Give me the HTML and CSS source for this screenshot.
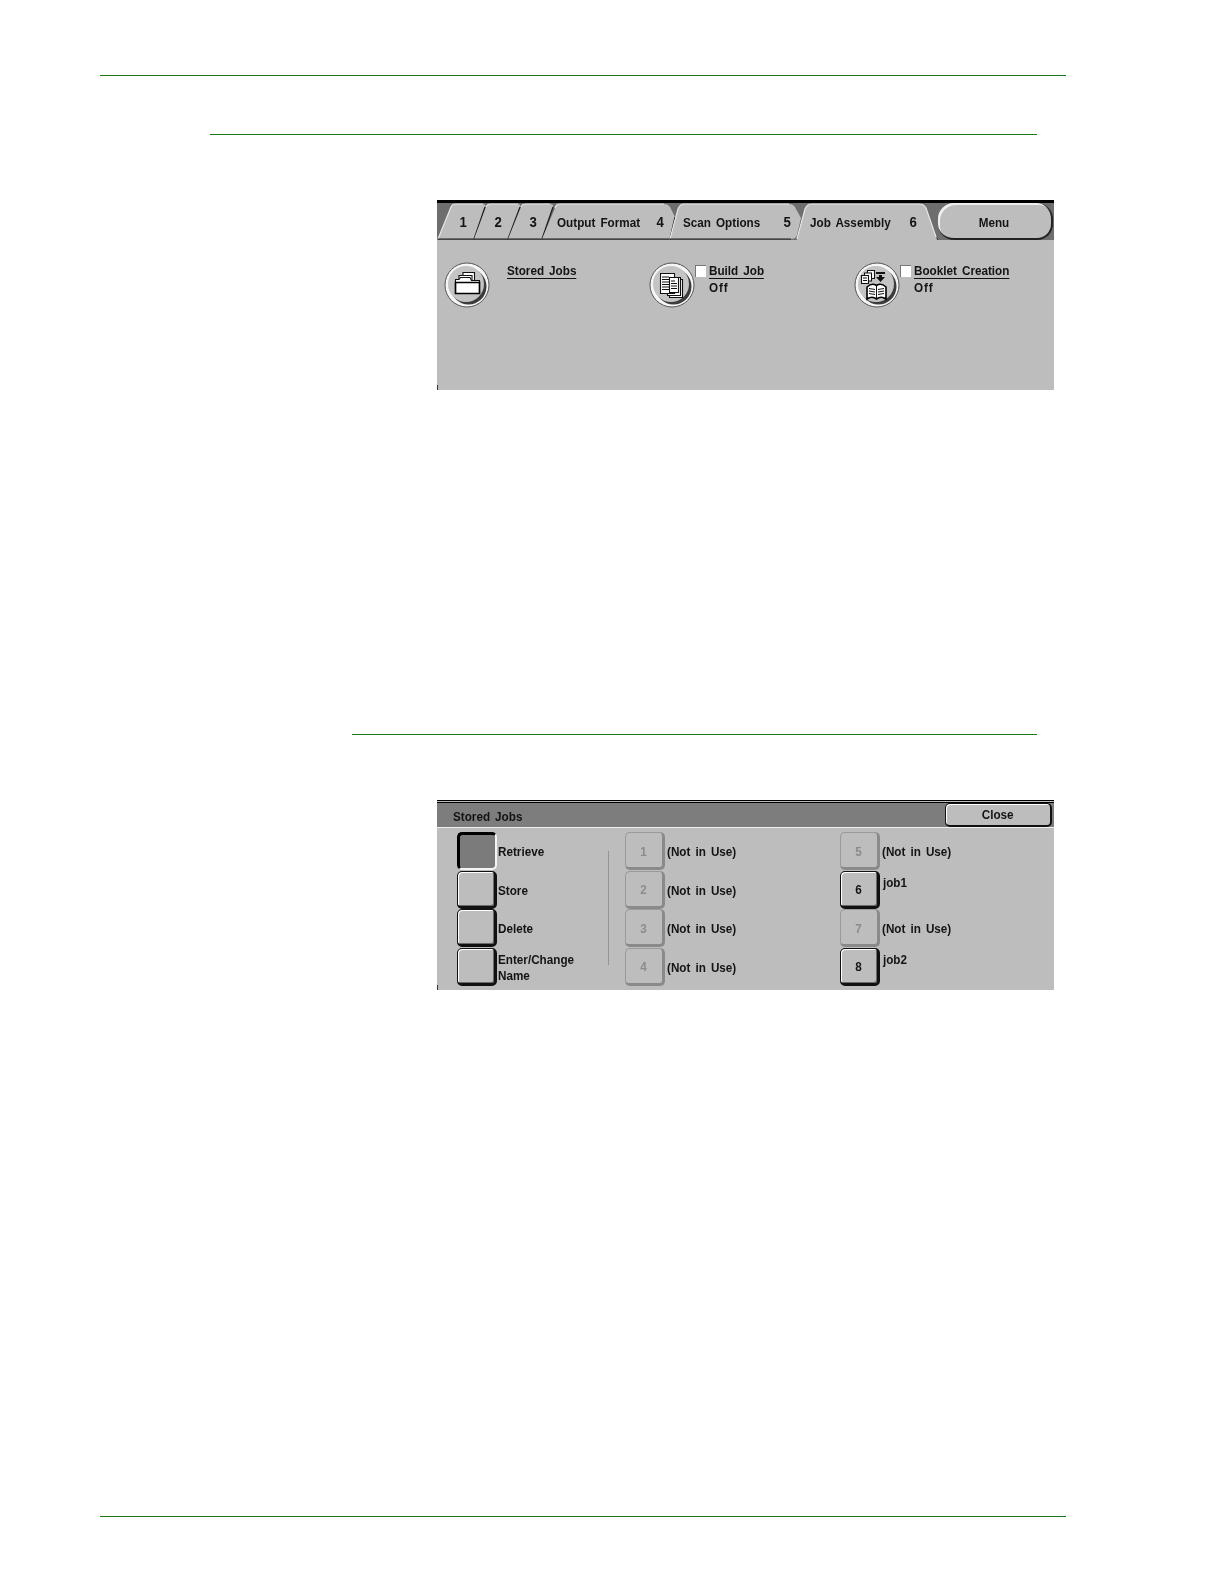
FILE: index.html
```html
<!DOCTYPE html>
<html lang="en">
<head>
<meta charset="utf-8">
<title>Job Assembly</title>
<link rel="stylesheet" href="styles.css">
</head>
<body>
<main class="sheet">
  <div class="rule rule-page-top"></div>
  <div class="rule rule-section"></div>

  <section class="panel panel-tabs">
    <div class="tabs">
      <svg class="tab-art" width="617" height="37" viewBox="0 0 617 37" aria-hidden="true">
        <path class="tab-fill" d="M1,36 L14,4 Q15,1 19,1 L46,1 Q49,1 48,4 L37,36 Z"/>
        <path class="tab-lit" d="M1,36 L14,4 Q15,1 19,1 L46,1"/>
        <path class="tab-dark" d="M48,4 L37,36 L1,36"/>
        <path class="tab-fill" d="M37,36 L49,4 Q50,1 54,1 L81,1 Q84,1 83,4 L71,36 Z"/>
        <path class="tab-lit" d="M49,4 Q50,1 54,1 L81,1"/>
        <path class="tab-dark" d="M83,4 L71,36 L37,36"/>
        <path class="tab-fill" d="M71,36 L84,4 Q85,1 89,1 L113,1 Q117,1 116,4 L105,36 Z"/>
        <path class="tab-lit" d="M84,4 Q85,1 89,1 L113,1"/>
        <path class="tab-dark" d="M116,4 L105,36 L71,36"/>
        <path class="tab-fill" d="M105,36 L118,5 Q119,1 123,1 L227,1 Q232,1 234,6 L238,14 L233,36 Z"/>
        <path class="tab-lit" d="M118,5 Q119,1 123,1 L227,1"/>
        <path class="tab-dark" d="M238,14 L233,36 L105,36"/>
        <path class="tab-fill" d="M233,36 L241,6 Q243,1 247,1 L352,1 Q357,1 359,6 L364,15 L360,32 Q359,36 354,36 Z"/>
        <path class="tab-lit" d="M233,36 L241,6 Q243,1 247,1 L352,1"/>
        <path class="tab-dark" d="M233,36 L354,36"/>
        <path class="tab-fill" d="M360,37 L368,6 Q370,1 375,1 L482,1 Q487,1 489,5 L500,37 Z"/>
        <path class="tab-lit" d="M360,36 L368,6 Q370,1 375,1 L482,1 Q487,1 489,5 L499,34"/>
        <path class="tab-dark" d="M500,36 L501,36"/>
      </svg>
      <div class="tab tab-1"><span class="num">1</span></div>
      <div class="tab tab-2"><span class="num">2</span></div>
      <div class="tab tab-3"><span class="num">3</span></div>
      <div class="tab tab-4"><span class="narrow">Output Format</span><span class="num">4</span></div>
      <div class="tab tab-5"><span class="narrow">Scan Options</span><span class="num">5</span></div>
      <div class="tab tab-6"><span class="narrow">Job Assembly</span><span class="num">6</span></div>
      <div class="menu"><span class="narrow narrow-mid">Menu</span></div>
    </div>
    <div class="features">
      <div class="feature">
        <svg class="round-icon" width="46" height="46" viewBox="0 0 46 46" aria-hidden="true">
          <circle class="ri-edge" cx="23" cy="23" r="22"/>
          <circle class="ri-shade" cx="24.5" cy="24.5" r="18"/>
          <circle class="ri-face" cx="22" cy="22" r="18"/>
          <path class="ic-white" d="M19,19 V10.5 H30.5 V19 Z"/>
          <path class="ic-white" d="M15,20 V13.5 H28 V20 Z"/>
          <path class="ic-white" d="M11.5,31.5 V17.5 H15 L16.5,15.5 H26 L27.5,18.5 H35.5 V31.5 Z"/>
          <path class="ic-bold" d="M11.5,31.5 V20.5 H35.5 V31.5 Z"/>
        </svg>
        <div class="feature-text feature-text-plain">
          <div class="feature-title narrow">Stored Jobs</div>
        </div>
      </div>
      <div class="feature">
        <svg class="round-icon" width="46" height="46" viewBox="0 0 46 46" aria-hidden="true">
          <circle class="ri-edge" cx="23" cy="23" r="22"/>
          <circle class="ri-shade" cx="24.5" cy="24.5" r="18"/>
          <circle class="ri-face" cx="22" cy="22" r="18"/>
          <path class="ic-white" d="M20.5,17.5 H33.5 V35.5 H20.5 Z"/>
          <path class="ic-white" d="M18.5,15.5 H31.5 V33.5 H18.5 Z"/>
          <path class="ic-white" d="M11.5,11.5 H25.5 V31.5 H11.5 Z"/>
          <path class="ic-lines" d="M13,15 H20 M13,17.5 H24 M13,20 H24 M13,22.5 H24 M13,25 H24 M13,27.5 H24"/>
          <path class="ic-white" d="M20.5,15.5 H29.5 V30.5 H20.5 Z"/>
          <path class="ic-lines" d="M22,19 H26 M22,21.5 H28 M22,24 H28 M22,26.5 H28"/>
        </svg>
        <span class="check"></span>
        <div class="feature-text">
          <div class="feature-title narrow">Build Job</div>
          <div class="feature-value narrow">Off</div>
        </div>
      </div>
      <div class="feature">
        <svg class="round-icon" width="46" height="46" viewBox="0 0 46 46" aria-hidden="true">
          <circle class="ri-edge" cx="23" cy="23" r="22"/>
          <circle class="ri-shade" cx="24.5" cy="24.5" r="18"/>
          <circle class="ri-face" cx="22" cy="22" r="18"/>
          <path class="ic-white" d="M13.5,8.5 H20.5 V16.5 H13.5 Z"/>
          <path class="ic-white" d="M10.5,11 H17.5 V19 H10.5 Z"/>
          <path class="ic-white" d="M7.5,13.5 H14.5 V21.5 H7.5 Z"/>
          <path class="ic-lines" d="M9,16 H13 M9,18.5 H13"/>
          <path class="ic-solid" d="M22,10 H31 V12 H22 Z M25,13 H28 V15 H31 L26.5,20 L22,15 H25 Z"/>
          <path class="ic-book" d="M13,25 Q18,20.5 22.5,23.5 Q27,20.5 32,25 V37 Q27,33.5 22.5,37 Q18,33.5 13,37 Z"/>
          <path class="ic-lines" d="M22.5,23.5 V37 M15,26.5 L21,27.5 M15,29 L21,30 M15,31.5 L21,32.5 M24,27.5 L30,26.5 M24,30 L30,29 M24,32.5 L30,31.5"/>
        </svg>
        <span class="check"></span>
        <div class="feature-text">
          <div class="feature-title narrow">Booklet Creation</div>
          <div class="feature-value narrow">Off</div>
        </div>
      </div>
    </div>
  </section>

  <div class="rule rule-sub"></div>

  <section class="panel panel-jobs">
    <header class="jobs-head">
      <span class="jobs-title narrow">Stored Jobs</span>
      <div class="close"><span class="narrow narrow-mid">Close</span></div>
    </header>
    <div class="jobs-body">
      <div class="col col-actions">
        <div class="row"><div class="key key-on"></div><div class="row-label narrow">Retrieve</div></div>
        <div class="row"><div class="key"></div><div class="row-label narrow">Store</div></div>
        <div class="row"><div class="key"></div><div class="row-label narrow">Delete</div></div>
        <div class="row"><div class="key"></div><div class="row-label narrow">Enter/Change<br>Name</div></div>
      </div>
      <div class="divider"></div>
      <div class="col col-slots col-slots-a">
        <div class="row"><div class="key key-off"><span class="narrow narrow-mid">1</span></div><div class="row-label narrow">(Not in Use)</div></div>
        <div class="row"><div class="key key-off"><span class="narrow narrow-mid">2</span></div><div class="row-label narrow">(Not in Use)</div></div>
        <div class="row"><div class="key key-off"><span class="narrow narrow-mid">3</span></div><div class="row-label narrow">(Not in Use)</div></div>
        <div class="row"><div class="key key-off"><span class="narrow narrow-mid">4</span></div><div class="row-label narrow">(Not in Use)</div></div>
      </div>
      <div class="col col-slots">
        <div class="row"><div class="key key-off"><span class="narrow narrow-mid">5</span></div><div class="row-label narrow">(Not in Use)</div></div>
        <div class="row"><div class="key"><span class="narrow narrow-mid">6</span></div><div class="row-label row-label-top narrow">job1</div></div>
        <div class="row"><div class="key key-off"><span class="narrow narrow-mid">7</span></div><div class="row-label narrow">(Not in Use)</div></div>
        <div class="row"><div class="key"><span class="narrow narrow-mid">8</span></div><div class="row-label row-label-top narrow">job2</div></div>
      </div>
    </div>
  </section>

  <div class="rule rule-page-bottom"></div>
</main>
</body>
</html>
```

FILE: styles.css
```css
* { box-sizing: border-box; }
html, body { margin: 0; padding: 0; background: #fff; }
body {
  font-family: "Liberation Sans", Arial, sans-serif;
  font-weight: 700;
  font-size: 13px;
  color: #141414;
}
.sheet { width: 1224px; height: 1584px; padding-top: 75px; overflow: hidden; }

/* The panel's lettering is a tall, condensed bitmap face */
.narrow {
  display: inline-block;
  white-space: nowrap;
  word-spacing: 2px;
  transform: scaleX(0.9);
  transform-origin: left center;
}
.narrow-mid { transform-origin: center center; }

.rule { height: 1px; background: #1a781a; }
.rule-page-top { margin-left: 100px; width: 966px; }
.rule-section { margin: 58px 0 0 210px; width: 827px; }
.rule-sub { margin: 344px 0 0 352px; width: 685px; }
.rule-page-bottom { margin: 526px 0 0 100px; width: 966px; }

.panel {
  position: relative;
  width: 617px;
  height: 190px;
  margin-left: 437px;
  margin-top: 65px;
  background: #bdbdbd;
  filter: blur(0.3px);
}
.panel::after {
  content: "";
  position: absolute;
  left: 0;
  bottom: 0;
  width: 1px;
  height: 5px;
  background: #333;
}

/* Tab strip */
.panel-tabs { border-top: 3px solid #000; }
.tabs { position: relative; display: flex; height: 37px; background: #6e6e6e; }
.tab-art { position: absolute; left: 0; top: 0; }
.tab-fill { fill: #bdbdbd; }
.tab-lit { fill: none; stroke: #e6e6e6; stroke-width: 1.2; }
.tab-dark { fill: none; stroke: #1c1c1c; stroke-width: 1.2; }
.tab {
  position: relative;
  display: flex;
  align-items: center;
  justify-content: space-between;
  padding-top: 2px;
}
.num {
  display: inline-block;
  flex: none;
  width: 8px;
  margin-top: -2px;
  font-size: 15px;
  text-align: center;
  transform: scaleX(0.88);
}
.tab-1 { width: 43px; padding-left: 22px; }
.tab-2 { width: 36px; padding-left: 14px; }
.tab-3 { width: 35px; padding-left: 13px; }
.tab-4 { width: 126px; padding: 2px 13px 0 6px; }
.tab-5 { width: 126px; padding: 2px 12px 0 6px; }
.tab-6 { width: 130px; padding: 2px 16px 0 7px; }
.menu {
  position: relative;
  display: flex;
  align-items: center;
  justify-content: center;
  width: 115px;
  margin-left: 5px;
  padding: 3px 2px 0 0;
  background: #bdbdbd;
  border-radius: 16px;
  border: 1px solid #222;
  border-width: 0 2px 2px 0;
  box-shadow: inset 2px 2px 0 #eee;
}

/* Feature row */
.features {
  display: grid;
  grid-template-columns: 205px 205px 199px;
  padding: 22px 0 0 7px;
}
.feature { display: flex; align-items: flex-start; }
.round-icon { flex: none; }
.ri-edge { fill: #f6f6f6; stroke: #555; stroke-width: 1; }
.ri-shade { fill: #3c3c3c; }
.ri-face { fill: #c4c4c4; }
.ic-white { fill: #fff; stroke: #111; stroke-width: 1.1; }
.ic-bold { fill: none; stroke: #000; stroke-width: 1.6; }
.ic-book { fill: #fff; stroke: #000; stroke-width: 1.6; }
.ic-lines { fill: none; stroke: #111; stroke-width: 1; }
.ic-solid { fill: #111; }
.check {
  flex: none;
  width: 11px;
  height: 12px;
  margin: 3px 3px 0 0;
  background: #fff;
  border: 1px solid #777;
  border-width: 1px 0 0 1px;
}
.feature-text { padding-top: 1px; }
.feature-text-plain { margin-left: 17px; }
.feature-title {
  display: block;
  width: fit-content;
  line-height: 15px;
  border-bottom: 1px solid #111;
}
.feature-value { display: block; width: fit-content; line-height: 17px; letter-spacing: 1px; }

/* Stored jobs dialog */
.panel-jobs { border-top: 3px double #000; }
.jobs-head {
  display: flex;
  align-items: stretch;
  justify-content: space-between;
  height: 25px;
  padding: 0 2px 0 16px;
  background: #7d7d7d;
  border-bottom: 1px solid #f0f0f0;
}
.jobs-title { align-self: center; padding-top: 3px; }
.close {
  display: flex;
  align-items: center;
  justify-content: center;
  width: 107px;
  background: #bdbdbd;
  border-radius: 5px;
  border: 1px solid #111;
  border-width: 1px 2px 2px 1px;
  box-shadow: inset 1px 1px 0 #fff;
}
.jobs-body { display: flex; padding: 4px 0 0 20px; }
.col { display: flex; flex-direction: column; }
.col-actions { width: 151px; }
.divider { flex: none; width: 1px; height: 114px; margin-top: 19px; background: #949494; }
.col-slots-a { width: 215px; margin-left: 16px; }
.row { display: flex; align-items: center; gap: 1px; height: 38.5px; }
.col-slots .row { gap: 2px; }
.row-label { line-height: 16px; padding-top: 2px; }
.row-label-top { align-self: flex-start; padding: 4px 0 0 1px; }
.key {
  flex: none;
  display: flex;
  align-items: center;
  justify-content: center;
  width: 40px;
  height: 38px;
  padding-top: 2px;
  border-radius: 5px;
  border: 1px solid #111;
  border-width: 1px 3px 3px 1px;
  box-shadow: inset 1px 1px 0 #fff, inset -1px -1px 0 #6a6a6a;
  background: #bdbdbd;
}
.key-on {
  background: #7b7b7b;
  border-color: #000 #f4f4f4 #f4f4f4 #000;
  border-width: 3px 2px 2px 3px;
  box-shadow: none;
}
.key-off {
  color: #8c8c8c;
  border-color: #9a9a9a #8a8a8a #8a8a8a #9a9a9a;
  box-shadow: none;
}
```
